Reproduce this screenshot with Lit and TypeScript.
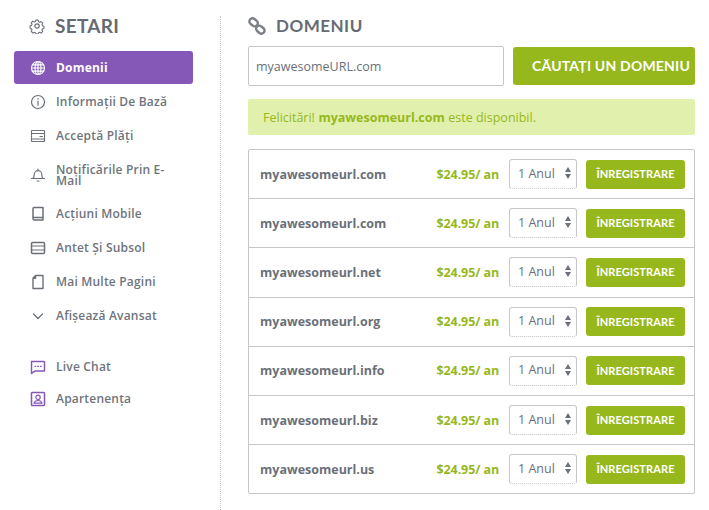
import { LitElement, html, css, svg } from "lit";
import { customElement } from "lit/decorators.js";

const I = (c: unknown, color = "#6b7078") => html`<svg class="ic" width="16" height="16" viewBox="0 0 16 16" fill="none" stroke=${color} stroke-width="1.2" stroke-linecap="round" stroke-linejoin="round">${c}</svg>`;

const icons: Record<string, unknown> = {
  globe: svg`<circle cx="8" cy="8" r="6.5"/><ellipse cx="8" cy="8" rx="3" ry="6.5"/><path d="M1.5 8h13M8 1.5v13M2.5 4.8h11M2.5 11.2h11"/>`,
  info: svg`<circle cx="8" cy="8" r="6.5"/><path d="M8 7.2v4M8 4.6v.6"/>`,
  card: svg`<rect x="1.5" y="2.5" width="13" height="11" rx=".5" stroke-dasharray="1.2 .8"/><path d="M1.5 5.5h13M1.5 11h13M10 8.5h2.5"/>`,
  bell: svg`<path d="M3 11.5c1-1 1.2-2 1.2-4a3.8 3.8 0 0 1 7.6 0c0 2 .2 3 1.2 4zM1.5 11.5h13M8 2.2v1.2M7 14h2"/>`,
  book: svg`<path d="M3 12.8V2.5A1 1 0 0 1 4 1.5h9v10H4a1 1 0 0 0-1 1.2A1.3 1.3 0 0 0 4.3 14H13v-2.5" stroke-width="1.5"/>`,
  header: svg`<rect x="1.5" y="2.5" width="13" height="11" rx="1.2" stroke-width="1.5"/><path d="M1.5 6h13M1.5 10h13"/>`,
  page: svg`<path d="M5.5 1.5H13v13H3V4.2zM5.5 1.5v2.7H3" stroke-width="1.4"/>`,
  chev: svg`<path d="M3.5 6l4.5 4.5L12.5 6"/>`,
  chat: svg`<path d="M1.5 2.5h13v9.5H5l-3.5 2.5z" stroke-dasharray="1.5 .7" stroke-width="1.5"/><path d="M5 7.3h.8M7.7 7.3h.8M10.4 7.3h.8"/>`,
  user: svg`<rect x="1.5" y="1.5" width="13" height="13" rx=".8" stroke-dasharray="2 .7" stroke-width="1.6"/><circle cx="8" cy="6.3" r="2.2"/><path d="M4 12.2c.6-2 2-2.7 4-2.7s3.400.7 4 2.7z"/>`,
};

const nav = [
  ["globe", "Domenii"],
  ["info", "Informații De Bază"],
  ["card", "Acceptă Plăți"],
  ["bell", "Notificările Prin E-Mail"],
  ["book", "Acțiuni Mobile"],
  ["header", "Antet Și Subsol"],
  ["page", "Mai Multe Pagini"],
  ["chev", "Afișează Avansat"],
];
const rows = ["com", "com", "net", "org", "info", "biz", "us"];

@customElement("app-root")
export class AppRoot extends LitElement {
  static styles = css`
    :host { display: block; width: 709px; height: 510px; overflow: hidden; background: #fff;
      font-family: "Open Sans", sans-serif; color: #6b7078; }
    * { box-sizing: border-box; }
    .page { display: flex; height: 510px; padding-top: 16px; }
    aside { width: 221px; height: 494px; padding: 0 27px 0 14px; border-right: 1px dotted #c4c6ca; flex: none; }
    .title { display: flex; align-items: center; gap: 10px; padding-left: 15px; height: 20px; margin-bottom: 15px;
      font: 700 19px/20px Lato, sans-serif; letter-spacing: .3px; color: #666b73; }
    .item { display: flex; align-items: center; gap: 10px; padding: 0 8px 0 16px; min-height: 33px; margin-bottom: 1px;
      font-size: 12px; font-weight: 600; line-height: 11px; color: #6f747c; border-radius: 3px; letter-spacing: .2px; }
    .item.two { min-height: 43px; }
    .item.on { background: #8558b8; color: #fff; font-weight: 700; }
    .item .ic { flex: none; }
    .gap { height: 18px; }
    .item.s { min-height: 31px; }
    main { width: 447px; margin-left: 27px; flex: none; }
    h2 { display: flex; align-items: center; gap: 10px; margin: 0 0 10px; height: 20px;
      font: 700 17px/20px Lato, sans-serif; letter-spacing: .5px; color: #666b73; }
    h2 .ic { width: 18px; height: 18px; }
    .search { display: flex; gap: 9px; align-items: center; height: 40px; }
    .input { width: 256px; height: 40px; border: 1px solid #c4c6ca; border-radius: 2px; padding: 0 7px;
      display: flex; align-items: center; font-size: 12.5px; color: #6b7078; }
    .go { flex: 1; height: 38px; background: #97b81c; border-radius: 3px; color: #fff; display: flex; align-items: center;
      justify-content: flex-end; padding-right: 5px; font: 700 14px/1 Lato, sans-serif; letter-spacing: .2px; white-space: nowrap; }
    .alert { margin-top: 13px; height: 36px; background: #e2f0ae; border-radius: 2px; display: flex; align-items: center;
      padding-left: 15px; font-size: 12.5px; color: #97b81c; }
    .alert b { font-weight: 700; margin: 0 3.5px; }
    .list { margin-top: 14px; border: 1px solid #c4c6ca; border-radius: 2px; }
    .row { display: flex; align-items: center; height: 49.2px; padding: 0 9px 0 11px; border-bottom: 1px solid #c4c6ca; }
    .row:last-child { border-bottom: 0; height: 48px; }
    .name { flex: 1; font-size: 12.5px; font-weight: 700; color: #6b7078; }
    .price { font-size: 12.5px; font-weight: 700; color: #97b81c; margin-right: 10px; letter-spacing: -.1px; }
    .sel { width: 68px; height: 30px; border: 1px solid #c4c6ca; border-bottom-style: dotted; border-radius: 3px;
      display: flex; align-items: center; justify-content: space-between; padding: 0 5px 2px 8px; font-size: 12.5px; color: #6b7078; }
    .arr { display: flex; flex-direction: column; gap: 2px; }
    .arr i { width: 0; height: 0; border-left: 3.5px solid transparent; border-right: 3.5px solid transparent; display: block; }
    .arr i:first-child { border-bottom: 5px solid #6b7078; }
    .arr i:last-child { border-top: 5px solid #6b7078; }
    .reg { width: 99px; height: 29px; margin-left: 9px; padding-bottom: 1px; background: #97b81c; border-radius: 3px; color: #fff; display: flex;
      align-items: center; justify-content: center; font: 700 11px/1 Lato, sans-serif; letter-spacing: .1px; }
  `;

  render() {
    return html`<div class="page">
      <aside>
        <div class="title">${I(svg`<circle cx="8" cy="8" r="2.2"/><path d="M6.700 1.500h2.600l.4 1.800 1.300.6 1.600-.9 1.800 1.900-.9 1.500.6 1.300 1.600.5v2.500l-1.600.5-.6 1.300.9 1.500-1.800 1.900-1.600-.9-1.300.6-.4 1.300H6.700l-.4-1.300-1.300-.6-1.600.9-1.800-1.900.9-1.500-.6-1.300-1.600-.5V7.800l1.600-.5.6-1.300-.9-1.500 1.800-1.900 1.600.9 1.300-.6z" transform="translate(.8 .8) scale(.9)"/>`)}<span>SETARI</span></div>
        ${nav.map(([k, t], i) => html`<div class="item ${i === 0 ? "on" : ""} ${i === 3 ? "two" : ""}">${I(icons[k], i === 0 ? "#fff" : "#6b7078")}<span>${t}</span></div>`)}
        <div class="gap"></div>
        <div class="item s">${I(icons.chat, "#8558b8")}<span>Live Chat</span></div>
        <div class="item s">${I(icons.user, "#8558b8")}<span>Apartenența</span></div>
      </aside>
      <main>
        <h2>${I(svg`<g stroke-width="2.2"><rect x="1" y="2" width="8" height="5.5" rx="2.7" transform="rotate(40 5 4.700)"/><rect x="7" y="8.500" width="8" height="5.500" rx="2.700" transform="rotate(40 11 11.200)"/></g>`, "#7d8187")}<span>DOMENIU</span></h2>
        <div class="search">
          <div class="input">myawesomeURL.com</div>
          <div class="go">CĂUTAȚI UN DOMENIU</div>
        </div>
        <div class="alert">Felicitări!<b>myawesomeurl.com</b>este disponibil.</div>
        <div class="list">
          ${rows.map((r) => html`<div class="row">
            <div class="name">myawesomeurl.${r}</div>
            <div class="price">$24.95/ an</div>
            <div class="sel"><span>1 Anul</span><span class="arr"><i></i><i></i></span></div>
            <div class="reg">ÎNREGISTRARE</div>
          </div>`)}
        </div>
      </main>
    </div>`;
  }
}
